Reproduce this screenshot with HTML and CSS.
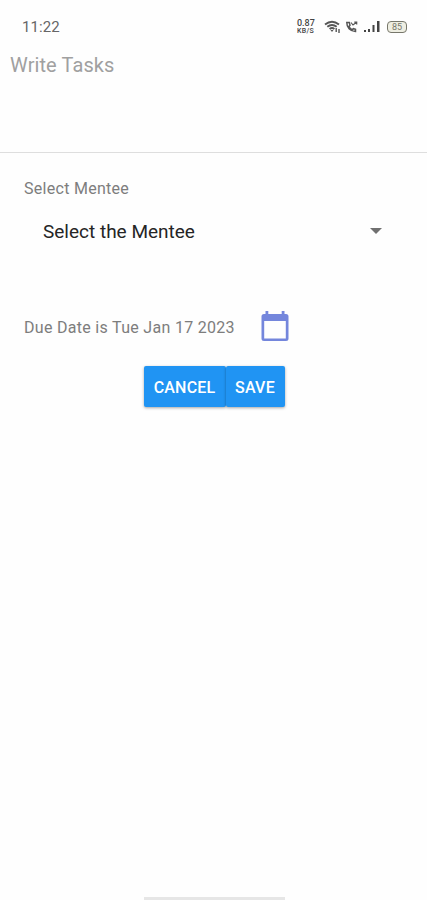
FILE: index.html
```html
<!DOCTYPE html>
<html lang="en">
<head>
<meta charset="utf-8">
<title>Write Tasks</title>
<link rel="stylesheet" href="styles.css">
</head>
<body>
<div class="screen">
  <header class="status">
    <span class="clock">11:22</span>
    <div class="indicators">
      <div class="speed"><span>0.87</span><span class="unit">KB/S</span></div>
      <svg class="wifi" width="17" height="14" viewBox="0 0 17 14" fill="none" stroke="#555" stroke-width="1.9">
        <path d="M1 4.500Q8 -1 15 4.500M3.300 6.800Q8 3 12.700 6.800M5.600 9Q8 7 10.400 9"/>
        <path d="M6.500 10h3L8 12z" fill="#555" stroke="none"/>
        <path d="M12.200 8v4M15 9v4" stroke-width="1.4"/>
      </svg>
      <svg class="call" width="13" height="12" viewBox="0 0 13 12" fill="none" stroke="#555" stroke-width="1.5">
        <path d="M1.800 1.500C1.800 6.500 5 10.300 10.500 10.500V8.300L8.400 7.700 7.200 8.800C5.500 8 4.600 6.800 4 5.200L5 4.200 4.300 1.500Z"/>
        <path d="M6 1.500l2 2.500L11.500 1.300M9.300 1.200h2.400v2.200" stroke-width="1.200"/>
      </svg>
      <svg class="signal" width="16" height="13" viewBox="0 0 16 13" fill="#444">
        <path d="M0 10h2v2H0zM4 9h2v3H4zM8.500 5h2v7h-2zM13 1h2.500v11H13z"/>
      </svg>
      <span class="battery">85</span>
    </div>
  </header>
  <section class="task"><span>Write Tasks</span></section>
  <main class="form">
    <label class="label">Select Mentee</label>
    <div class="picker">
      <span>Select the Mentee</span>
      <svg width="12" height="6" viewBox="0 0 12 6" fill="#707070"><path d="M0 0h12L6 6z"/></svg>
    </div>
    <div class="due">
      <span class="date">Due Date is Tue Jan 17 2023</span>
      <svg width="28" height="31" viewBox="0 0 28 31">
        <path fill="#7486dc" fill-rule="evenodd" d="M4.500 0h2.800v3h13.400V0h2.800v3H25a2.500 2.500 0 0 1 2.500 2.500V27.500a2.500 2.500 0 0 1-2.500 2.500H3a2.500 2.500 0 0 1-2.500-2.500V5.500A2.500 2.500 0 0 1 3 3h1.500zM3.200 10v17.400h21.600V10z"/>
      </svg>
    </div>
    <div class="actions">
      <button class="cancel">CANCEL</button><button class="save">SAVE</button>
    </div>
  </main>
  <div class="home"></div>
</div>
</body>
</html>
```
FILE: styles.css
```css
* { box-sizing: border-box; }
body { margin: 0; background: #fefefe; font-family: Roboto, sans-serif; color: #7d7d7d; }
.screen { height: 900px; display: flex; flex-direction: column; overflow: hidden; }
.status { height: 53px; flex: none; display: flex; justify-content: space-between; padding: 0 20px 0 22px; }
.clock { margin-top: 18px; font-size: 15px; line-height: 18px; color: #666; letter-spacing: .1px; }
.indicators { display: flex; align-items: center; height: 53px; }
.speed { display: flex; flex-direction: column; width: 19px; font-size: 9px; line-height: 9px; font-weight: 500; color: #444; }
.unit { font-size: 7px; line-height: 7px; letter-spacing: .3px; }
.wifi { margin-left: 8px; }
.call { margin-left: 4px; }
.signal { margin-left: 6px; }
.battery { width: 20px; height: 12px; margin-left: 7px; border: 1.5px solid #77776b; border-radius: 4px; background: #eeeee2; font-size: 9px; line-height: 10px; text-align: center; color: #77776b; }
.task { height: 100px; flex: none; padding: 0 10px; border-bottom: 1px solid #dedede; font-size: 20px; line-height: 24px; color: #a0a0a0; letter-spacing: .1px; }
.form { flex: 1; display: flex; flex-direction: column; padding: 26px 24px 0; }
.label { font-size: 16px; line-height: 20px; letter-spacing: .28px; }
.picker { display: flex; justify-content: space-between; align-items: center; height: 24px; margin-top: 20px; padding: 0 21px 0 19px; font-size: 19px; color: #252525; }
.due { display: flex; align-items: center; height: 31px; margin-top: 68px; font-size: 16px; letter-spacing: .3px; }
.date { width: 237px; padding-top: 1px; }
.actions { display: flex; align-self: flex-start; margin: 24px 0 0 120px; }
.actions button { height: 41px; border: 0; border-radius: 2px; padding: 2px 0 0; background: #2094f3; color: #fff; font: 500 16px/39px Roboto, sans-serif; letter-spacing: .2px; box-shadow: 0 1px 3px rgba(0, 0, 0, .35); }
.actions .cancel { width: 82px; padding-right: 1px; }
.actions .save { width: 59px; padding-right: 1px; }
.home { flex: none; margin-left: 144px; width: 141px; height: 3px; background: #e6e6e6; }
```
